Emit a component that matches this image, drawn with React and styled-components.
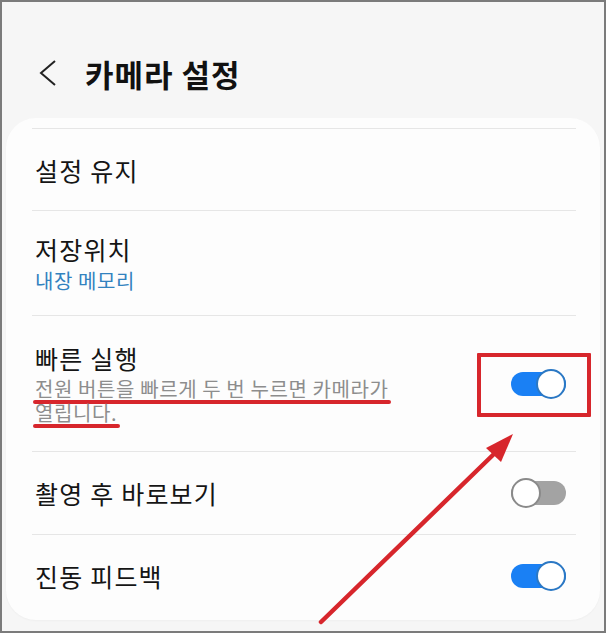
import React from "react";
import styled, { createGlobalStyle } from "styled-components";

const GlobalStyle = createGlobalStyle`
  html, body {
    margin: 0;
    padding: 0;
    background: #f6f6f6;
  }
  * {
    box-sizing: border-box;
  }
`;

const Frame = styled.div`
  position: relative;
  width: 606px;
  height: 633px;
  border: 2px solid #7b7b7b;
  background: #f6f6f6;
  display: flex;
  flex-direction: column;
  overflow: hidden;
  font-family: "Noto Sans CJK KR", "Noto Sans", sans-serif;
`;

const Header = styled.div`
  height: 116px;
  padding: 26px 0 0 34px;
  display: flex;
  align-items: center;
  flex-shrink: 0;
  .back {
    width: 26px;
    height: 90px;
    display: flex;
    align-items: center;
  }
  .title {
    margin-left: 23px;
    font-size: 31px;
    font-weight: 700;
    color: #111;
    letter-spacing: 1px;
  }
`;

const Card = styled.div`
  flex: 1;
  margin: 0 4px 11px 4px;
  padding: 10px 24px 0 26px;
  background: #fdfdfd;
  border-radius: 30px;
  box-shadow: 0 1px 2px rgba(0, 0, 0, 0.03);
`;

const Row = styled.div`
  height: ${(p) => p.$h}px;
  border-top: 1px solid #e6e6e6;
  padding: 0 10px 0 3px;
  display: flex;
  align-items: center;
  justify-content: space-between;
`;

const Texts = styled.div`
  display: flex;
  flex-direction: column;
`;

const Title = styled.div`
  font-size: 25px;
  line-height: 30px;
  letter-spacing: 1.2px;
  color: #151515;
  white-space: nowrap;
`;

const Sub = styled.div`
  margin-top: ${(p) => p.$gap || 4}px;
  font-size: 20px;
  line-height: 24px;
  letter-spacing: 0.6px;
  color: ${(p) => (p.$tone === "blue" ? "#3282bf" : "#8d8d8d")};
  white-space: nowrap;
  display: flex;
  flex-direction: column;
  align-items: flex-start;
`;

const Mark = styled.span`
  position: relative;
  display: inline-block;
  &::after {
    content: "";
    position: absolute;
    left: -2px;
    right: -3px;
    bottom: -3px;
    height: 4px;
    border-radius: 2px;
    background: #d7262c;
  }
`;

const Highlight = styled.div`
  position: relative;
  &::after {
    content: "";
    position: absolute;
    top: -19px;
    bottom: -21px;
    left: -34px;
    right: -25px;
    border: 4px solid #d7262c;
    border-radius: 1px;
  }
`;

const Toggle = styled.div`
  width: 55px;
  height: 24px;
  border-radius: 12px;
  background: ${(p) => (p.$on ? "#1a80f4" : "#a3a3a3")};
  display: flex;
  align-items: center;
  justify-content: ${(p) => (p.$on ? "flex-end" : "flex-start")};
`;

const Thumb = styled.div`
  width: 30px;
  height: 30px;
  flex-shrink: 0;
  border-radius: 50%;
  background: #fff;
  border: 2px solid ${(p) => (p.$on ? "#2b78c4" : "#8a8a8a")};
`;

const Arrow = styled.svg`
  position: absolute;
  left: -2px;
  top: -2px;
  pointer-events: none;
`;

function Switch({ on }) {
  return (
    <Toggle $on={on}>
      <Thumb $on={on} />
    </Toggle>
  );
}

export default function App() {
  return (
    <>
      <GlobalStyle />
      <Frame>
        <Header>
          <div className="back">
            <svg width="26" height="30" viewBox="0 0 26 30">
              <polyline
                points="19,3 5,15 19,27"
                fill="none"
                stroke="#222"
                strokeWidth="2"
                strokeLinejoin="miter"
              />
            </svg>
          </div>
          <div className="title">카메라 설정</div>
        </Header>
        <Card>
          <Row $h={82}>
            <Texts>
              <Title>설정 유지</Title>
            </Texts>
          </Row>
          <Row $h={105}>
            <Texts>
              <Title>저장위치</Title>
              <Sub $tone="blue" $gap={5}>내장 메모리</Sub>
            </Texts>
          </Row>
          <Row $h={136}>
            <Texts>
              <Title>빠른 실행</Title>
              <Sub $gap={4}>
                <Mark>전원 버튼을 빠르게 두 번 누르면 카메라가</Mark>
                <Mark>열립니다.</Mark>
              </Sub>
            </Texts>
            <Highlight>
              <Switch on />
            </Highlight>
          </Row>
          <Row $h={83}>
            <Texts>
              <Title>촬영 후 바로보기</Title>
            </Texts>
            <Switch on={false} />
          </Row>
          <Row $h={83}>
            <Texts>
              <Title>진동 피드백</Title>
            </Texts>
            <Switch on />
          </Row>
        </Card>
        <Arrow width="606" height="633" viewBox="0 0 606 633">
          <line
            x1="321"
            y1="622"
            x2="496"
            y2="452"
            stroke="#d7262c"
            strokeWidth="4.5"
            strokeLinecap="round"
          />
          <polygon points="513,434 486,448 501,462" fill="#d7262c" />
        </Arrow>
      </Frame>
    </>
  );
}
